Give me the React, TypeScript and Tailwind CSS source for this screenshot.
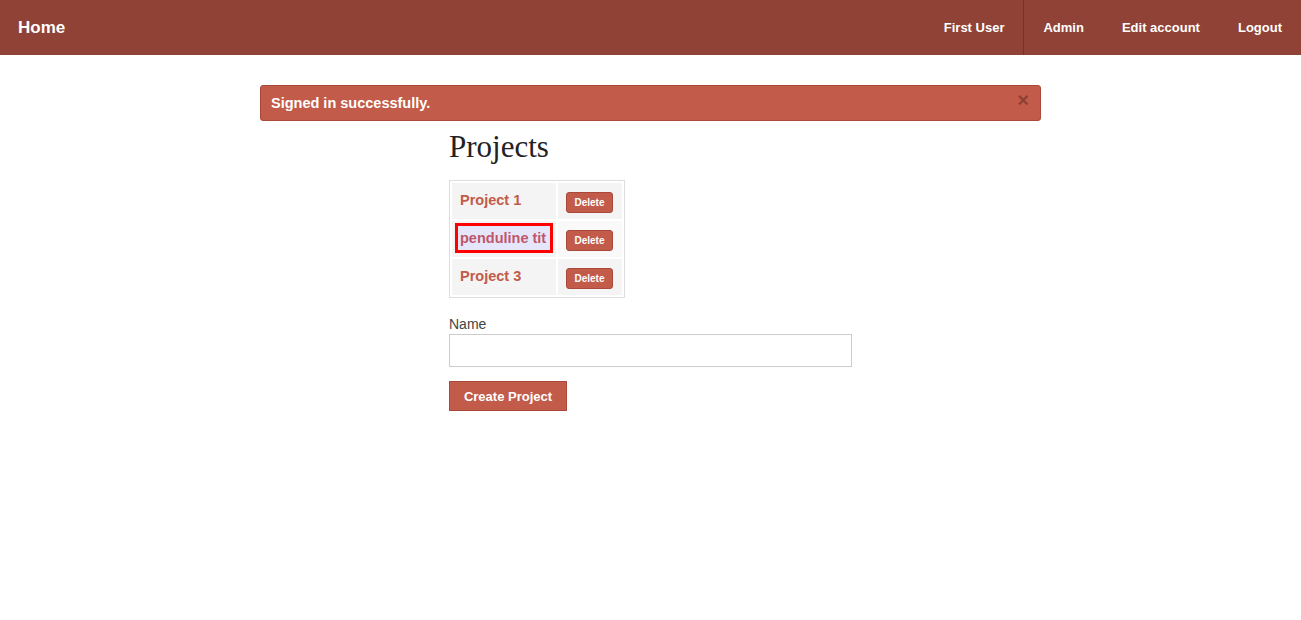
import React from "react";

const projects = [
  { id: 1, name: "Project 1" },
  { id: 2, name: "penduline tit", selected: true },
  { id: 3, name: "Project 3" },
];

export default function App() {
  return (
    <div className="min-h-screen bg-white font-['Liberation_Sans',Arial,sans-serif]">
      {/* top bar */}
      <nav className="h-[55px] bg-[#8f4235] flex items-center text-white font-bold">
        <a className="pl-[18px] text-[17px]">Home</a>
        <div className="ml-auto flex h-full items-center text-[13px]">
          <a className="h-full flex items-center px-[19px] border-r border-[#7a3328]">First User</a>
          <a className="h-full flex items-center px-[19px]">Admin</a>
          <a className="h-full flex items-center px-[19px]">Edit account</a>
          <a className="h-full flex items-center px-[19px]">Logout</a>
        </div>
      </nav>

      <div className="w-[781px] mx-auto pt-[30px]">
        {/* flash */}
        <div className="relative h-[36px] bg-[#c25b49] border border-[#a9493a] rounded-[3px] pl-[10px] pt-[1px] flex items-center text-white text-[14.5px] font-bold">
          Signed in successfully.
          <span className="absolute right-[11px] top-[4px] text-[20px] leading-[20px] font-bold text-black/30">×</span>
        </div>

        <div className="w-[403px] mx-auto">
          <h1 className="mt-[10px] text-[31px] leading-[31px] text-[#222] font-['Liberation_Serif',Georgia,serif]">
            Projects
          </h1>

          <table className="mt-[18px] border border-[#dddddd] border-separate border-spacing-[2px]">
            <tbody>
              {projects.map((p) => (
                <tr key={p.id}>
                  <td className="h-[36px] w-[104px] bg-[#f4f4f4] pl-[8px] pr-[4px] text-[14.5px] font-bold text-[#c25b49] whitespace-nowrap">
                    {p.selected ? (
                      <span className="relative -ml-[2px] pl-[2px] pr-[4px] py-[4px] bg-[#e6e6fa] outline-3 outline-[#ff0000] text-[#c0566a]">
                        {p.name}
                      </span>
                    ) : (
                      p.name
                    )}
                  </td>
                  <td className={"h-[36px] w-[64px] px-[8px] " + (p.selected ? "bg-[#f9f9f9]" : "bg-[#f4f4f4]")}>
                    <button className="w-[47px] h-[21px] bg-[#c25b49] border border-[#a9493a] rounded-[3px] text-white text-[10px] font-bold leading-none">
                      Delete
                    </button>
                  </td>
                </tr>
              ))}
            </tbody>
          </table>

          <form className="mt-[17px]" onSubmit={(e) => e.preventDefault()}>
            <label className="block text-[14px] leading-[19px] text-[#444]">Name</label>
            <input
              type="text"
              className="block w-[403px] h-[33px] border border-[#cccccc] px-2 text-[14px] outline-none"
            />
            <button
              type="submit"
              className="mt-[14px] w-[118px] h-[30px] pt-[2px] bg-[#c25b49] border border-[#a9493a] text-white text-[13px] font-bold"
            >
              Create Project
            </button>
          </form>
        </div>
      </div>
    </div>
  );
}
